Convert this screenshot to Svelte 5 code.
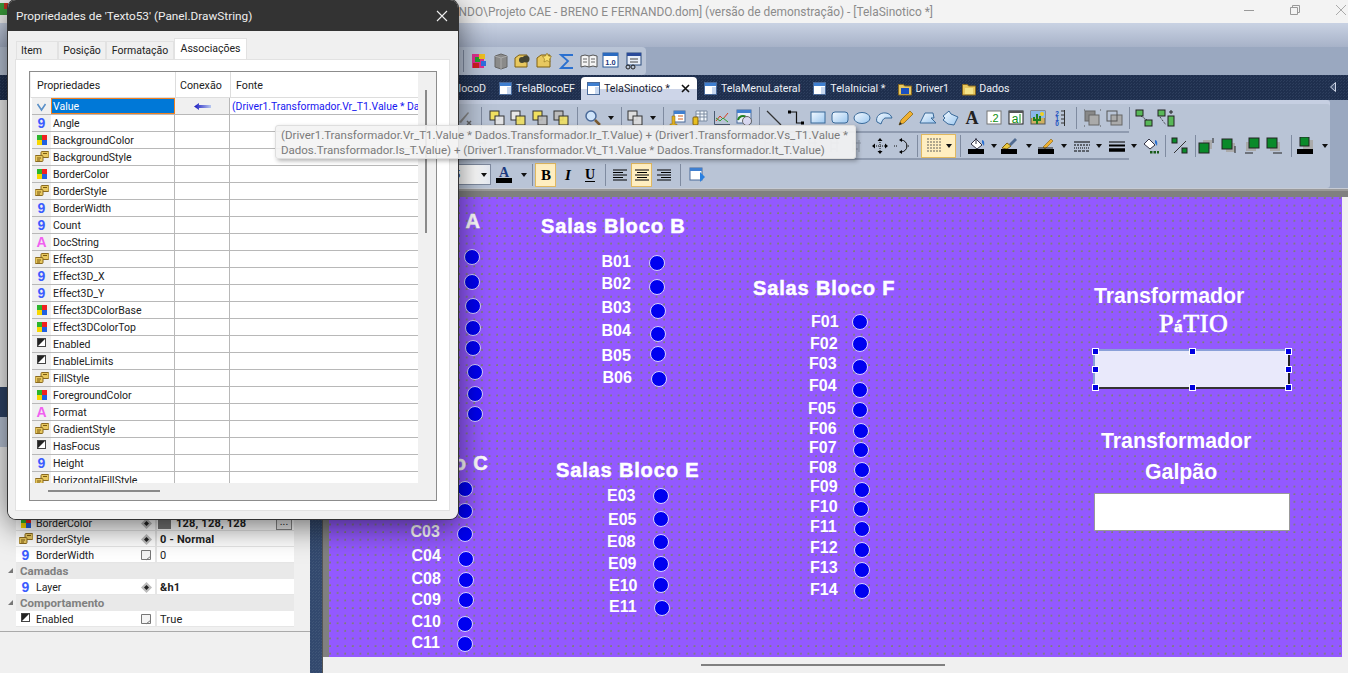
<script>
	const OX = 329, OY = 197;

	const titles = [
		{ t: 'Salas Bloco A', x: 337, y: 221 },
		{ t: 'Salas Bloco B', x: 541, y: 226 },
		{ t: 'Salas Bloco C', x: 344, y: 463 },
		{ t: 'Salas Bloco E', x: 556, y: 470 },
		{ t: 'Salas Bloco F', x: 753, y: 288 }
	];

	const labels = [
		['B01',601.5,262],['B02',601.5,284],['B03',601.5,308],['B04',601.5,331],['B05',601.5,356],['B06',602.5,378],
		['C03',410.5,532],['C04',411.5,556],['C08',411.5,579],['C09',411.5,600],['C10',411.5,622],['C11',411.5,643],
		['E03',607,496],['E05',608,520],['E08',607,542],['E09',608,564],['E10',609,586],['E11',609,607],
		['F01',811,322],['F02',810,344],['F03',809,364],['F04',809,386],['F05',808,409],['F06',809,429],['F07',809,448],
		['F08',809,468],['F09',810,487],['F10',810,507],['F11',810,527],['F12',810,548],['F13',810,568],['F14',810,590]
	];

	const dots = [
		[472,257],[472,282],[473,306],[473,328],[473,348],[475,372],[475,394],[475,414],
		[657,263],[657,287],[658,311],[658,334],[658,354],[659,379],
		[465,489],[465,511],[465,534],[466,559],[466,580],[466,600],[465,624],[465,644],[466,665],
		[661,496],[661,519],[661,542],[661,564],[661,585],[662,608],
		[860,322],[860,344],[860,367],[860,390],[860,410],[861,431],[861,450],[862,470],[862,490],[861,509],[862,529],[862,550],[862,570],[862,591]
	];

	const handles = [[0,0],[50,0],[100,0],[0,50],[100,50],[0,100],[50,100],[100,100]];

	const props = [
		['v','Value'],['n','Angle'],['c','BackgroundColor'],['s','BackgroundStyle'],['c','BorderColor'],['s','BorderStyle'],
		['n','BorderWidth'],['n','Count'],['a','DocString'],['s','Effect3D'],['n','Effect3D_X'],['n','Effect3D_Y'],
		['c','Effect3DColorBase'],['c','Effect3DColorTop'],['b','Enabled'],['b','EnableLimits'],['s','FillStyle'],
		['c','ForegroundColor'],['a','Format'],['s','GradientStyle'],['b','HasFocus'],['n','Height'],['s','HorizontalFillStyle']
	];

	const glyph = {
		v: '<polyline points="2.500,5 6.500,11 10.500,5" fill="none" stroke="#5a90c8" stroke-width="1.600"/>',
		n: '<text x="6.500" y="12" text-anchor="middle" font-family="Liberation Sans" font-weight="700" font-size="14" fill="#3d5cff">9</text>',
		a: '<text x="6.500" y="12" text-anchor="middle" font-family="Liberation Sans" font-weight="700" font-size="14" fill="#f060f0">A</text>',
		c: '<rect x="2" y="2" width="5" height="5" fill="#2cb52c"/><rect x="7" y="2" width="5" height="5" fill="#f02020"/><rect x="2" y="7" width="5" height="5" fill="#f8d800"/><rect x="7" y="7" width="5" height="5" fill="#2060e0"/>',
		s: '<rect x="6" y="1.500" width="8" height="6" rx="1" fill="#e8c860" stroke="#8a6a20"/><rect x="0" y="5.500" width="8" height="6" rx="1" fill="#e8c860" stroke="#8a6a20"/><path d="M2 8h4M2 10h3M8 3.500h4" stroke="#7a5a10"/>',
		b: '<rect x="2.500" y="1.500" width="8" height="8" fill="#fff" stroke="#444"/><path d="M3 2h7L3 9z" fill="#222"/>'
	};

	const win = '<rect x=".5" y=".5" width="12" height="12" fill="#fff" stroke="#4a6a9a"/><rect x="1" y="1" width="11" height="3" fill="#3f7fd0"/><rect x="8" y="5" width="4" height="7" fill="#c8d8f0"/>';
	const folder = (c) => `<path d="M.5 2.500h5l1 1.500h7v9h-13z" fill="#e8c860" stroke="#8a6a20"/><rect x="3" y="6" width="8" height="6" fill="${c}"/>`;
	const ovl = (a, b) => `<rect x="2" y="2" width="9" height="9" fill="${a}" stroke="#333"/><rect x="7" y="7" width="9" height="9" fill="${b}" stroke="#333" fill-opacity=".9"/>`;
	const bar = '<rect x="0" y="12" width="16" height="5" fill="#000"/>';

	const ic = {
		erase: '<path d="M3 13L12 3l1 1L5 14z" fill="#888"/><path d="M11 12l4 4m0-4l-4 4" stroke="#666" stroke-width="1.500"/>',
		o1: ovl('#f0e060','#e8e8e8'), o2: ovl('#e8e8e8','#f0e060'), o3: ovl('#f0e060','#bbb'), o4: ovl('#bbb','#f0e060'),
		mag: '<circle cx="7" cy="7" r="5" fill="#cfe4fa" stroke="#4a6a9a" stroke-width="1.500"/><path d="M11 11l5 5" stroke="#7a5a30" stroke-width="2.500"/>',
		ov: ovl('#ddd','#ddd'),
		tag: '<rect x="5" y="2" width="11" height="11" fill="#fff" stroke="#4a6a9a"/><rect x="5" y="2" width="11" height="3" fill="#3f7fd0"/><path d="M9 7h5M9 10h5" stroke="#d06020"/><path d="M3 15V7h3v8h2v2H1v-2z" fill="#e0b020" stroke="#806010" stroke-width=".5"/>',
		tbl: '<path d="M5 2h11v10H5z" fill="#f4f8fc" stroke="#7a8aa0"/><path d="M5 5h11M5 8h11M9 2v10M13 2v10" stroke="#7a8aa0"/><rect x="2" y="8" width="5" height="8" rx="1" fill="#e8c020" stroke="#806010"/>',
		chart: '<path d="M1.500 2v13.500H17" fill="none" stroke="#4a5a70"/><path d="M3 12l4-5 3 3 5-6" fill="none" stroke="#d04020"/><path d="M3 9l4 3 3-3 5 4" fill="none" stroke="#30a030"/>',
		run: '<rect x="2" y="1" width="14" height="13" fill="#e8eef8" stroke="#4a6a9a"/><rect x="2" y="1" width="14" height="3" fill="#3f7fd0"/><path d="M3 11a5 5 0 0 1 8-3" fill="none" stroke="#208020" stroke-width="2"/><circle cx="12" cy="12" r="4.500" fill="#d8d8f0" stroke="#666"/>',
		line: '<path d="M2 2l14 14" stroke="#333" stroke-width="1.200"/>',
		poly: '<path d="M2.500 3h7v11h6" fill="none" stroke="#111" stroke-width="1.200"/><rect x="1" y="1.500" width="3" height="3"/><rect x="14" y="12.500" width="3" height="3"/>',
		rect: '<rect x="2" y="3" width="14" height="11" fill="url(#blu)" stroke="#3a6a9a"/>',
		rrect: '<rect x="1" y="3" width="16" height="11" rx="3" fill="url(#blu)" stroke="#3a6a9a"/>',
		ell: '<ellipse cx="9" cy="9" rx="8" ry="5.500" fill="url(#blu)" stroke="#3a6a9a"/>',
		chord: '<path d="M2 13C0 8 5 3 11 4c3 .5 5 2 6 5l-7 0c-2 1-3 3-4 6z" fill="url(#blu)" stroke="#3a6a9a"/>',
		pencil: '<path d="M2 16l2-5 9-9 3 3-9 9z" fill="#f0b030" stroke="#806010" stroke-width=".7"/><path d="M2 16l1-3 2 2z" fill="#222"/>',
		pgon: '<path d="M1 14L6 4h8l1 5h-3l5 5z" fill="url(#blu)" stroke="#3a6a9a"/>',
		shape: '<path d="M2 7l6-5 2 3 7 3-4 8-6-1-5-4 2-2z" fill="url(#blu)" stroke="#3a6a9a"/>',
		atxt: '<text x="9" y="15" text-anchor="middle" font-family="Liberation Serif" font-weight="700" font-size="18" fill="#222">A</text>',
		num: '<rect x="2" y="2" width="14" height="13" fill="#fff" stroke="#777"/><text x="9" y="13" text-anchor="middle" font-family="Liberation Sans" font-size="11" fill="#109010">.2</text>',
		abox: '<rect x="2" y="2" width="14" height="13" fill="#fff" stroke="#222"/><rect x="2" y="2" width="14" height="2" fill="#555"/><text x="8" y="14" text-anchor="middle" font-family="Liberation Sans" font-size="12" fill="#109010">a</text><path d="M13 5v9" stroke="#109010"/>',
		pic: '<rect x="2" y="2" width="14" height="13" fill="#d0b060" stroke="#555"/><rect x="2" y="2" width="14" height="7" fill="#8ab8e8"/><circle cx="13" cy="5" r="2" fill="#f0d020"/><path d="M8 15V5m-3 3v3h6V7" fill="none" stroke="#208020" stroke-width="2"/>',
		scale: '<path d="M13.500 1v16M10 2h3.500M10 6h3.500M10 10h3.500M10 14h3.500" stroke="#333" fill="none"/><text x="6" y="7" text-anchor="middle" font-family="Liberation Sans" font-weight="700" font-size="6.500" fill="#2050c0">2</text><text x="6" y="12" text-anchor="middle" font-family="Liberation Sans" font-weight="700" font-size="6.500" fill="#2050c0">1</text><text x="6" y="17" text-anchor="middle" font-family="Liberation Sans" font-weight="700" font-size="6.500" fill="#2050c0">0</text>',
		g1: '<rect x="2" y="2" width="10" height="10" fill="#888" stroke="#666"/><rect x="6" y="6" width="10" height="10" fill="#aaa" stroke="#666"/><path d="M1 1h1M17 1h1M1 17h1M17 17h1" stroke="#555"/>',
		g2: '<rect x="6" y="6" width="11" height="10" fill="#aaa" stroke="#666"/><rect x="2" y="2" width="10" height="10" fill="none" stroke="#555"/>',
		gr1: '<rect x="1" y="1" width="7" height="6" fill="#58b858" stroke="#222"/><rect x="10" y="11" width="7" height="6" fill="#58b858" stroke="#222"/><path d="M6 7l6 4" stroke="#222" stroke-dasharray="1 1"/>',
		gr2: '<rect x="1" y="1" width="7" height="6" fill="#58b858" stroke="#222"/><rect x="11" y="7" width="6" height="10" fill="#58b858" stroke="#222"/><path d="M3 8l6 8" stroke="#222" stroke-dasharray="1 1"/><path d="M12 3h4M14 1v4" stroke="#222"/>',
		dis: '<path d="M4 3v12M10 3v12M4 6h8M4 12h5" stroke="#8e98a8" fill="none"/>',
		move: '<path d="M9 3v12M3 9h12" stroke="#111" stroke-dasharray="1 1"/><path d="M9 1l-2.500 3h5zM9 17l-2.500-3h5zM1 9l3-2.500v5zM17 9l-3-2.500v5z"/>',
		rot: '<path d="M1 9h4M13 9h4" stroke="#111" stroke-dasharray="1 1"/><path d="M8 3a6 6 0 0 1 0 12" fill="none" stroke="#111"/><path d="M9 1v4l-3-2zM9 17v-4l-3 2z"/>',
		fill: '<path d="M3 7l5-5 6 6-5 4z" fill="#fff" stroke="#334"/><path d="M8 1v6" stroke="#334"/><path d="M14 3q3 0 2 6l-2-3z" fill="#2a70d0"/>' + bar,
		brush: '<path d="M1 11l5-5 4 3-4 3z" fill="#e8c840" stroke="#806010"/><path d="M8 7l6-6 2 2-6 6z" fill="#506a90"/>' + bar,
		pen: '<path d="M5 10L13 2l2 2-8 8z" fill="#f0b030" stroke="#806010" stroke-width=".6"/><path d="M0 11h15" stroke="#222"/>' + bar,
		dash: '<path d="M1 5h16" stroke="#000" stroke-width="1"/><path d="M1 8h16" stroke="#000" stroke-dasharray="2 1"/><path d="M1 11h16" stroke="#000" stroke-dasharray="1 1"/><path d="M1 14h16" stroke="#000" stroke-dasharray="3 1"/>',
		thick: '<path d="M1 5h16" stroke="#000"/><path d="M1 8.500h16" stroke="#000" stroke-width="2"/><path d="M1 13h16" stroke="#000" stroke-width="3.500"/>',
		fill2: '<path d="M3 7l5-5 6 6-5 4z" fill="#fff" stroke="#334"/><path d="M14 3q3 0 2 6l-2-3z" fill="#2a70d0"/><rect x="9" y="14" width="2.500" height="2.500" fill="#185a18"/><rect x="12.500" y="14" width="2.500" height="2.500" fill="#185a18"/><rect x="16" y="14" width="2" height="2.500" fill="#185a18"/>',
		sw: '<rect x="1" y="1" width="5" height="5" fill="#0a8a2a" stroke="#222"/><path d="M3 16L15 4" stroke="#333"/><rect x="11" y="11" width="5" height="5" fill="#0a8a2a" stroke="#222"/>',
		up: '<rect x="5" y="3" width="9" height="9" fill="#aaa"/><rect x="1" y="6" width="10" height="10" fill="#0a8a2a" stroke="#222"/><path d="M15 1v5" stroke="#222"/>',
		down: '<rect x="6" y="6" width="9" height="9" fill="#aaa"/><rect x="2" y="2" width="10" height="10" fill="#0a8a2a" stroke="#222"/><path d="M15 9v7" stroke="#222"/>',
		left: '<rect x="3" y="5" width="10" height="9" fill="#aaa"/><rect x="6" y="1" width="10" height="10" fill="#0a8a2a" stroke="#222"/><path d="M2 16h8" stroke="#222"/>',
		right: '<rect x="5" y="5" width="10" height="9" fill="#aaa"/><rect x="2" y="1" width="10" height="10" fill="#0a8a2a" stroke="#222"/><path d="M8 16h9" stroke="#222"/>',
		shadow: '<rect x="6" y="3" width="10" height="9" fill="#aaa"/><rect x="3" y="0" width="9" height="9" fill="#0a8a2a" stroke="#222"/>' + bar,
		text: '<text x="8" y="11" text-anchor="middle" font-family="Liberation Serif" font-weight="700" font-size="14" fill="#1c3a80">A</text><rect x="0" y="12" width="16" height="5" fill="#000"/>',
		bold: '<text x="9" y="14" text-anchor="middle" font-family="Liberation Serif" font-weight="700" font-size="15" fill="#000">B</text>',
		ital: '<text x="9" y="14" text-anchor="middle" font-family="Liberation Serif" font-weight="700" font-style="italic" font-size="15" fill="#000">I</text>',
		und: '<text x="9" y="13" text-anchor="middle" font-family="Liberation Serif" font-weight="700" font-size="14" fill="#000">U</text><path d="M4 15.500h10" stroke="#000"/>',
		al: '<path d="M2 4h14M2 6.500h10M2 9h14M2 11.500h10M2 14h14" stroke="#000"/>',
		ac: '<path d="M2 4h14M4 6.500h10M2 9h14M4 11.500h10M2 14h14" stroke="#000"/>',
		ar: '<path d="M2 4h14M6 6.500h10M2 9h14M6 11.500h10M2 14h14" stroke="#000"/>',
		play: '<rect x="2" y="2" width="12" height="12" fill="#fff" stroke="#4a6a9a"/><rect x="2" y="2" width="12" height="3" fill="#3f7fd0"/><path d="M12 6l5 5-5 5z" fill="#2a80e0"/>',
		pal: '<rect x="2" y="2" width="12" height="14" fill="#e03090"/><rect x="5" y="5" width="5" height="5" fill="#20a030"/><rect x="9" y="2" width="6" height="5" fill="#f0c020"/><rect x="3" y="11" width="6" height="5" fill="#d02020"/><rect x="11" y="9" width="5" height="5" fill="#3070e0"/>',
		db: '<path d="M3 4l6-2 6 2v11l-6 2-6-2z" fill="#8a8a8a" stroke="#666"/><path d="M3 4l6 2 6-2M9 6v11" stroke="#aaa" fill="none"/>',
		fbin: '<path d="M1 15V6l4-3h8v12z" fill="#e8c860" stroke="#806010"/><circle cx="12" cy="7" r="3.500" fill="#443"/><circle cx="8" cy="8" r="3" fill="#443"/>',
		fstar: '<path d="M1 15V6l4-3h9v12z" fill="#e8c860" stroke="#806010"/><path d="M11 1l1.500 3 3 .5-2 2.500.5 3-3-1.500-3 1.500.5-3-2-2.500 3-.5z" fill="#f8e070" stroke="#806010" stroke-width=".5"/>',
		sig: '<path d="M15 3H3l7 6-7 7h12" fill="none" stroke="#2a70d0" stroke-width="1.800"/>',
		book: '<path d="M1 4q4-2 8 0 4-2 8 0v11q-4-2-8 0-4-2-8 0z" fill="#f4f4f4" stroke="#555"/><path d="M9 4v11M3 7h4M3 10h4M11 7h4M11 10h4" stroke="#666"/>',
		ten: '<rect x="1" y="1" width="15" height="14" fill="#fff" stroke="#2a5a9a"/><rect x="1" y="1" width="15" height="3" fill="#2a6ac0"/><text x="8.500" y="13" text-anchor="middle" font-family="Liberation Sans" font-weight="700" font-size="7.500" fill="#1a3a80">1.0</text>',
		form: '<rect x="3" y="1" width="14" height="12" fill="#e8eef8" stroke="#2a4a7a"/><rect x="3" y="1" width="14" height="3" fill="#2a4a9a"/><path d="M6 7h8M6 10h8" stroke="#444"/><circle cx="4" cy="15" r="2" fill="none" stroke="#222"/><circle cx="9" cy="15" r="2" fill="none" stroke="#222"/>'
	};

	const parse = (s) => s.split(' ').map((p) => {
		const [i, w, on] = p.split(':');
		return { i, w: +w, on: on === 'on' };
	});

	const topRow = parse('sep:9 pal:22 db:22 fbin:22 fstar:22 sig:22 book:22 ten:22 form:22');
	const row1 = parse('erase:22 sep:10 o1:21.5 o2:21.5 o3:21.5 o4:21.5 sep:10 mag:21.5 dd:14 sep:7 ov:21.5 dd:14 sep:7 tag:22 tbl:22 chart:22 run:22 sep:8 line:22 poly:22 rect:22 rrect:22 ell:22 chord:22 pencil:22 pgon:22 shape:22 atxt:22 num:22 abox:22 pic:22 scale:22 sep:10 g1:22 g2:22 sep:8 gr1:22 gr2:22');
	const row2 = parse(Array(18).fill('dis:22').join(' ') + ' move:22 rot:22 sep:8 grid:35:on sep:8 fill:26 dd:8 brush:24 dd:14 pen:22 dd:12 dash:24 dd:10 thick:26 dd:8 fill2:24 sep:6 sw:24 sep:6 up:18 down:26 left:20 right:24 sep:10 shadow:20 dd:18');
	const row3 = parse('text:28 dd:10 sep:6 bold:21:on ital:23 und:22 sep:8 al:22 ac:21:on ar:24 sep:8 play:26');

	const tabs = [
		{ name: 'TelaBlocoD', kind: 'win' },
		{ name: 'TelaBlocoEF', kind: 'win' },
		{ name: 'TelaSinotico *', kind: 'win', active: true },
		{ name: 'TelaMenuLateral', kind: 'win' },
		{ name: 'TelaInicial *', kind: 'win' },
		{ name: 'Driver1', kind: 'drv' },
		{ name: 'Dados', kind: 'dat' }
	];

	const lower = [
		{ cat: false, g: 'c', n: 'BorderColor', m: true, v: '128, 128, 128', swatch: true },
		{ cat: false, g: 's', n: 'BorderStyle', m: true, v: '0 - Normal' },
		{ cat: false, g: 'n', n: 'BorderWidth', m: false, v: '0', plain: true },
		{ cat: true, n: 'Camadas' },
		{ cat: false, g: 'n', n: 'Layer', m: true, v: '&h1' },
		{ cat: true, n: 'Comportamento' },
		{ cat: false, g: 'b', n: 'Enabled', m: false, v: 'True', plain: true }
	];
</script>

<div class="app">
	<header class="title">
		<svg class="appicon" width="8" height="12" viewBox="0 0 8 12"><rect width="8" height="12" fill="#3a9a3a"/><rect x="4" width="4" height="6" fill="#c03020"/></svg>
		<span class="title-text">FERNANDO\Projeto CAE - BRENO E FERNANDO.dom] (versão de demonstração) - [TelaSinotico *]</span>
		<div class="winbtns">
			<svg width="12" height="12" viewBox="0 0 12 12"><path d="M1 6.500h10" stroke="#999"/></svg>
			<svg width="12" height="12" viewBox="0 0 12 12"><path d="M1.500 3.500h7v7h-7zM3.500 3V1.500h7v7H9" fill="none" stroke="#999"/></svg>
			<svg width="12" height="12" viewBox="0 0 12 12"><path d="M1 1l10 10M11 1L1 11" stroke="#aaa"/></svg>
		</div>
	</header>

	<div class="menubar"></div>

	<div class="strip">
		<div class="strip-bar">
			{#each topRow as b}
				{#if b.i === 'sep'}
					<span class="sep" style:width="{b.w}px"></span>
				{:else}
					<span class="tool" style:width="{b.w}px"><svg width="18" height="18" viewBox="0 0 18 18">{@html ic[b.i]}</svg></span>
				{/if}
			{/each}
		</div>
	</div>

	<nav class="tabs">
		{#each tabs as t}
			<div class="tab" class:active={t.active}>
				<svg width="14" height="14" viewBox="0 0 14 14">
					{#if t.kind === 'win'}{@html win}{:else if t.kind === 'drv'}{@html folder('#1a50c0')}{:else}{@html folder('#f4e48a')}{/if}
				</svg>
				<span>{t.name}</span>
				{#if t.active}
					<svg class="tabx" width="9" height="9" viewBox="0 0 9 9"><path d="M1 1l7 7M8 1L1 8" stroke="#111" stroke-width="1.600"/></svg>
				{/if}
			</div>
		{/each}
		<svg class="tab-arrow" width="8" height="12" viewBox="0 0 8 12"><path d="M6.500 1.500v9L1.500 6z" fill="#4a5a78" stroke="#cfd6e6"/></svg>
	</nav>

	<div class="main">
		<aside class="side">
			<div class="side-top"></div>
			<div class="side-nav"></div>
			<div class="side-head"></div>
			<div class="side-gap"></div>
			<div class="lower">
				{#each lower as r}
					{#if r.cat}
						<div class="lrow cat"><span class="tri"></span>{r.n}</div>
					{:else}
						<div class="lrow">
							<span class="lic"><svg width="14" height="14" viewBox="0 0 14 14">{@html glyph[r.g]}</svg></span>
							<span class="lname">{r.n}</span>
							<span class="lmark">
								{#if r.m}
									<svg width="11" height="11" viewBox="0 0 11 11"><path d="M5.500 0l5.500 5.500-5.500 5.500L0 5.500z" fill="#bbb"/><path d="M5.500 3L8 5.500 5.500 8 3 5.500z" fill="#222"/></svg>
								{:else}
									<svg width="11" height="11" viewBox="0 0 11 11"><path d="M.5.500h9v9h-9z" fill="#f4f4f4" stroke="#777"/><path d="M5 10l5-4" stroke="#777"/></svg>
								{/if}
							</span>
							<span class="lval" class:plain={r.plain}>
								{#if r.swatch}<i class="swatch"></i>{/if}{r.v}
							</span>
							{#if r.swatch}<span class="more">...</span>{/if}
						</div>
					{/if}
				{/each}
			</div>
			<div class="side-bottom"></div>
		</aside>

		<div class="split"></div>

		<section class="work">
			<div class="drawbar">
				<div class="drawbar-in">
					<div class="row">
						{#each row1 as b}
							{#if b.i === 'sep'}<span class="sep" style:width="{b.w}px"></span>
							{:else if b.i === 'dd'}<span class="dd" style:width="{b.w}px"></span>
							{:else}<span class="tool" style:width="{b.w}px"><svg width="18" height="18" viewBox="0 0 18 18">{@html ic[b.i]}</svg></span>{/if}
						{/each}
					</div>
					<div class="row row2">
						{#each row2 as b}
							{#if b.i === 'sep'}<span class="sep" style:width="{b.w}px"></span>
							{:else if b.i === 'dd'}<span class="dd" style:width="{b.w}px"></span>
							{:else if b.i === 'grid'}<span class="gridbtn" style:width="{b.w}px"><i class="griddots"></i><i class="dd ddin"></i></span>
							{:else}<span class="tool" style:width="{b.w}px"><svg width="18" height="18" viewBox="0 0 18 18">{@html ic[b.i]}</svg></span>{/if}
						{/each}
					</div>
					<div class="row row3">
						<span class="combo"><span>5</span><i class="dd ddin"></i></span>
						{#each row3 as b}
							{#if b.i === 'sep'}<span class="sep" style:width="{b.w}px"></span>
							{:else if b.i === 'dd'}<span class="dd" style:width="{b.w}px"></span>
							{:else}<span class="tool" class:on={b.on} style:width="{b.w}px"><svg width="18" height="18" viewBox="0 0 18 18">{@html ic[b.i]}</svg></span>{/if}
						{/each}
					</div>
				</div>
			</div>

			<div class="ruler"></div>

			<div class="view">
				<div class="gutter"></div>
				<div class="canvas">
					{#each titles as t}
						<span class="ctitle" style:left="{t.x - OX}px" style:top="{t.y - OY}px">{t.t}</span>
					{/each}
					{#each labels as [t, x, y]}
						<span class="clabel" style:left="{x - OX}px" style:top="{y - OY}px">{t}</span>
					{/each}
					{#each dots as [x, y]}
						<span class="led" style:left="{x - OX}px" style:top="{y - OY}px"></span>
					{/each}

					<span class="big" style="left:{1094 - OX}px;top:{296 - OY}px">Transformador</span>
					<span class="patio" style="left:{1159 - OX}px;top:{324 - OY}px">P<small>á</small>TIO</span>
					<div class="box selected" style="left:{1093 - OX}px;top:{349 - OY}px">
						{#each handles as [hx, hy]}
							<i class="handle" style:left="{hx}%" style:top="{hy}%"></i>
						{/each}
					</div>
					<span class="big" style="left:{1101 - OX}px;top:{441 - OY}px">Transformador</span>
					<span class="big" style="left:{1145 - OX}px;top:{472 - OY}px">Galpão</span>
					<div class="box plain" style="left:{1094 - OX}px;top:{493 - OY}px"></div>
				</div>
				<div class="vgap"></div>
			</div>

			<div class="hscroll"><span class="hthumb"></span></div>
		</section>
	</div>

	<div class="dialog">
		<div class="dlg-title">
			<span>Propriedades de 'Texto53' (Panel.DrawString)</span>
			<svg width="12" height="12" viewBox="0 0 12 12"><path d="M1 1l10 10M11 1L1 11" stroke="#eee" stroke-width="1.100"/></svg>
		</div>
		<div class="dlg-body">
			<div class="dlg-tabs">
				<span class="dtab first">Item</span>
				<span class="dtab" style:width="48px">Posição</span>
				<span class="dtab" style:width="68px">Formatação</span>
				<span class="dtab on" style:width="73px">Associações</span>
			</div>
			<div class="page">
				<div class="grid">
					<div class="grid-main">
						<div class="ghead">
							<span class="c1">Propriedades</span>
							<span class="c2">Conexão</span>
							<span class="c3">Fonte</span>
						</div>
						<div class="gbody">
							{#each props as [g, n], i}
								<div class="grow">
									<span class="gicon"><svg width="14" height="14" viewBox="0 0 14 14">{@html glyph[g]}</svg></span>
									<span class="gname" class:sel={i === 0}>{n}</span>
									<span class="gconn" class:linked={i === 0}>
										{#if i === 0}
											<svg width="17" height="9" viewBox="0 0 17 9"><defs><linearGradient id="arr"><stop offset="0" stop-color="#1818c0"/><stop offset="1" stop-color="#b8c8f0"/></linearGradient></defs><path d="M0 4.500L5 1v2h12v3H5v2z" fill="url(#arr)"/></svg>
										{/if}
									</span>
									<span class="gsrc">{i === 0 ? '(Driver1.Transformador.Vr_T1.Value * Dados.Transformador.Ir_T.Value)' : ''}</span>
								</div>
							{/each}
						</div>
						<div class="ghscroll"><i></i></div>
					</div>
					<div class="gvscroll"><i></i></div>
				</div>
			</div>
		</div>
	</div>

	<div class="tooltip">
		(Driver1.Transformador.Vr_T1.Value * Dados.Transformador.Ir_T.Value) + (Driver1.Transformador.Vs_T1.Value *<br />
		Dados.Transformador.Is_T.Value) + (Driver1.Transformador.Vt_T1.Value * Dados.Transformador.It_T.Value)
	</div>

	<svg width="0" height="0" class="defs"><defs><linearGradient id="blu" x1="0" y1="0" x2="1" y2="1"><stop offset="0" stop-color="#f4f9ff"/><stop offset="1" stop-color="#9cc8f0"/></linearGradient></defs></svg>
</div>

<style>
	:global(body) {
		margin: 0;
		background: #f0f0f0;
	}

	.app {
		position: relative;
		width: 1348px;
		height: 673px;
		overflow: hidden;
		display: flex;
		flex-direction: column;
		font-family: Roboto, "Noto Sans", sans-serif;
	}

	.defs {
		position: absolute;
	}

	.title {
		height: 23px;
		flex: none;
		background: #f3f3f3;
		display: flex;
		align-items: center;
		position: relative;
		font-size: 11.9px;
		color: #8b8b8b;
	}

	.appicon {
		margin: -6px 0 0 0;
	}

	.title-text {
		width: 925px;
		text-align: right;
		white-space: nowrap;
		overflow: hidden;
		flex: none;
	}

	.winbtns {
		margin-left: auto;
		display: flex;
		gap: 34px;
		margin-right: 1px;
		padding-bottom: 4px;
	}

	.menubar {
		height: 24px;
		flex: none;
		background: linear-gradient(#c9d2e3, #a7b2c8);
	}

	.strip {
		height: 28px;
		flex: none;
		background: #9aa8c0;
	}

	.strip-bar {
		width: 646px;
		height: 100%;
		box-sizing: border-box;
		padding-left: 459px;
		background: #b9c4d6;
		border-radius: 0 4px 4px 0;
		display: flex;
		align-items: center;
	}

	.tabs {
		height: 25px;
		flex: none;
		box-sizing: border-box;
		padding: 2px 0 0 408px;
		display: flex;
		position: relative;
		background-color: #1f2f4e;
		background-image: linear-gradient(45deg, #2d3e5d 25%, transparent 25%, transparent 75%, #2d3e5d 75%);
		background-size: 3px 3px;
		color: #eef1f6;
		font-size: 10.7px;
	}

	.tab {
		display: flex;
		align-items: center;
		gap: 3px;
		padding: 0 6px 0 7px;
		white-space: nowrap;
	}

	.tab.active {
		background: linear-gradient(#ffffff 50%, #cdd5e8 50%);
		border-radius: 4px 4px 0 0;
		color: #1a2233;
		padding: 0 7px 0 6px;
		width: 103px;
	}

	.tabx {
		margin-left: auto;
		margin-right: 0;
	}

	.tab-arrow {
		position: absolute;
		left: 1329px;
		top: 6px;
	}

	.main {
		flex: 1;
		display: flex;
		min-height: 0;
	}

	.side {
		width: 310px;
		flex: none;
		display: flex;
		flex-direction: column;
		background: #f0f0f0;
		font-size: 10.5px;
		color: #222;
	}

	.side-top {
		height: 287px;
		flex: none;
		background: #f0f0f0;
	}

	.side-nav {
		height: 30px;
		flex: none;
		background: #2f4468;
	}

	.side-head {
		height: 30px;
		flex: none;
		background: #b9c4d6;
	}

	.side-gap {
		flex: 1;
	}

	.lower {
		margin: 0 16px 0 16px;
		flex: none;
	}

	.lrow {
		height: 16px;
		display: flex;
		align-items: center;
		background: #fff;
		width: 278px;
		position: relative;
		box-shadow: inset 0 -1px 0 #e6e6e6;
	}

	.lrow.cat {
		background: #e9e9e9;
		color: #808080;
		font-weight: 700;
		font-size: 11.5px;
		padding-left: 4px;
		box-sizing: border-box;
		box-shadow: none;
	}

	.tri {
		position: absolute;
		left: -8px;
		top: 5px;
		border-left: 5px solid transparent;
		border-bottom: 5px solid #777;
	}

	.lic {
		width: 20px;
		flex: none;
		display: flex;
		justify-content: center;
	}

	.lname {
		width: 105px;
		flex: none;
	}

	.lmark {
		width: 14px;
		flex: none;
		display: flex;
	}

	.lval {
		border-left: 2px solid #e6e6e6;
		padding-left: 3px;
		height: 100%;
		display: flex;
		align-items: center;
		font-weight: 700;
		font-size: 11px;
		letter-spacing: .2px;
	}

	.lval.plain {
		font-weight: 400;
	}

	.swatch {
		width: 13px;
		height: 11px;
		background: #777;
		margin: 0 5px 0 -2px;
	}

	.more {
		position: absolute;
		right: 2px;
		top: 2px;
		width: 14px;
		height: 11px;
		line-height: 8px;
		text-align: center;
		border: 1px solid #888;
		background: #eee;
	}

	.side-bottom {
		height: 42px;
		flex: none;
		margin-top: 4px;
		border-top: 1px solid #aaa;
		box-sizing: border-box;
	}

	.split {
		width: 12px;
		flex: none;
		background-color: #33496e;
		background-image: linear-gradient(45deg, #3f5577 25%, transparent 25%, transparent 75%, #3f5577 75%);
		background-size: 3px 3px;
	}

	.work {
		flex: 1;
		min-width: 0;
		display: flex;
		flex-direction: column;
		background: #f0f0f0;
	}

	.drawbar {
		height: 88px;
		flex: none;
		background: #9aa8c0;
		padding-top: 4px;
		box-sizing: border-box;
	}

	.drawbar-in {
		width: 1008px;
		height: 84px;
		background: #b9c4d6;
		box-shadow: 0 -4px 0 #c6cfe2;
		border-radius: 0 3px 3px 0;
	}

	.row {
		height: 27px;
		display: flex;
		align-items: center;
		padding-left: 132px;
	}

	.row2 {
		height: 29px;
		padding-left: 151px;
		position: relative;
	}

	.row2::before,
	.row2::after {
		content: "";
		position: absolute;
		left: 0;
		width: 807px;
		height: 2px;
		background: #8f9bb0;
	}

	.row2::before {
		top: 0;
	}

	.row2::after {
		bottom: 0;
	}

	.row3 {
		height: 28px;
		padding-left: 119px;
		padding-top: 1px;
		box-sizing: border-box;
	}

	.tool {
		display: flex;
		justify-content: center;
		align-items: center;
		height: 24px;
		flex: none;
		box-sizing: border-box;
	}

	.tool.on {
		background: #ffeec0;
		border: 1px solid #e0b860;
	}

	.sep {
		flex: none;
		height: 22px;
		display: flex;
		justify-content: center;
		position: relative;
	}

	.sep::after {
		content: "";
		width: 1px;
		background: #7f8ba0;
	}

	.dd {
		flex: none;
		height: 22px;
		position: relative;
		display: block;
	}

	.dd::after {
		content: "";
		position: absolute;
		left: calc(50% - 3px);
		top: 9px;
		border: 3px solid transparent;
		border-top: 4px solid #111;
		border-bottom: 0;
	}

	.ddin {
		width: 12px;
		margin-left: auto;
	}

	.gridbtn {
		height: 24px;
		box-sizing: border-box;
		flex: none;
		display: flex;
		align-items: center;
		background: #ffeec0;
		border: 1px solid #e0b860;
		padding-left: 5px;
	}

	.griddots {
		width: 15px;
		height: 15px;
		background-image: radial-gradient(circle at 1px 1px, #555 .6px, transparent .8px);
		background-size: 3px 3px;
	}

	.combo {
		width: 50px;
		height: 21px;
		flex: none;
		box-sizing: border-box;
		border: 1px solid #7f8ba0;
		padding-left: 12px;
		background: linear-gradient(90deg, #fff 70%, #e4e8f0);
		display: flex;
		align-items: center;
		font-size: 11px;
		color: #222;
	}

	.ruler {
		height: 9px;
		flex: none;
		background: #808080;
		border-top: 1px solid #c6cbd4;
		box-sizing: border-box;
		box-shadow: inset 0 2px 0 #9a9a9a;
	}

	.view {
		height: 460px;
		flex: none;
		display: flex;
	}

	.gutter {
		width: 7px;
		flex: none;
		background: #808080;
		border-left: 1px solid #555;
		box-sizing: border-box;
	}

	.canvas {
		flex: 1;
		position: relative;
		overflow: hidden;
		background-color: #9359ff;
		background-image: radial-gradient(circle at 1px 1px, rgba(120, 135, 85, .85) .65px, transparent .85px);
		background-size: 7.6px 7.6px;
		font-family: "Liberation Sans", Arial, sans-serif;
		color: #fff;
		font-weight: 700;
	}

	.vgap {
		width: 6px;
		flex: none;
	}

	.ctitle,
	.clabel,
	.big,
	.patio {
		position: absolute;
		white-space: nowrap;
		transform: translateY(-50%);
		line-height: 1;
	}

	.ctitle {
		font-size: 20px;
		letter-spacing: .85px;
		-webkit-text-stroke: .5px #fff;
	}

	.clabel {
		font-size: 16px;
	}

	.big {
		font-size: 21.3px;
		line-height: 22px;
	}

	.patio {
		font-family: "Liberation Serif", serif;
		font-size: 26px;
		letter-spacing: .6px;
		font-weight: 400;
		-webkit-text-stroke: .7px #fff;
	}

	.patio small {
		font-size: 17px;
		font-weight: 700;
	}

	.led {
		position: absolute;
		width: 16px;
		height: 16px;
		box-sizing: border-box;
		margin: -8px 0 0 -8px;
		border-radius: 50%;
		background: #0000f0;
		border: 1px solid #d8d0ff;
	}

	.box {
		position: absolute;
		width: 197px;
		height: 40px;
		box-sizing: border-box;
	}

	.box.plain {
		width: 196px;
		height: 38px;
		background: #fff;
		border: 1px solid #999;
	}

	.box.selected {
		background: #e9e9fb;
		border: 2px solid;
		border-color: #8aa0d8 #222 #333 #8aa0d8;
	}

	.handle {
		position: absolute;
		width: 5px;
		height: 5px;
		margin: -3px 0 0 -3px;
		background: #0000e0;
		border: 1px solid #fff;
	}

	.hscroll {
		height: 16px;
		flex: none;
		border-left: 1px solid #555;
		display: flex;
		align-items: center;
	}

	.hthumb {
		margin-left: 378px;
		width: 244px;
		height: 2px;
		background: #808080;
	}

	.dialog {
		position: absolute;
		left: 8px;
		top: 0;
		width: 450px;
		height: 519px;
		display: flex;
		flex-direction: column;
		border-radius: 8px;
		overflow: hidden;
		box-shadow: 0 0 0 1px #333, 0 6px 32px rgba(0, 0, 0, .6);
		font-size: 10.5px;
		color: #222;
	}

	.dlg-title {
		height: 31px;
		flex: none;
		background: #333;
		color: #eee;
		font-size: 11.8px;
		display: flex;
		align-items: center;
		justify-content: space-between;
		padding: 0 10px 0 8px;
	}

	.dlg-body {
		flex: 1;
		background: #f0f0f0;
		padding: 7px 8px 8px 7px;
		display: flex;
		flex-direction: column;
		min-height: 0;
	}

	.dlg-tabs {
		display: flex;
		height: 21px;
		align-items: flex-end;
		padding-left: 1px;
		flex: none;
	}

	.dtab {
		height: 18px;
		box-sizing: border-box;
		background: #f0f0f0;
		border: 1px solid #e2e2e2;
		border-bottom: 0;
		text-align: center;
		line-height: 18px;
		flex: none;
	}

	.dtab.first {
		width: 42px;
		text-align: left;
		padding-left: 4px;
	}

	.dtab.on {
		height: 21px;
		background: #fff;
		line-height: 19px;
	}

	.page {
		flex: 1;
		background: #fff;
		border: 1px solid #e2e2e2;
		padding: 11px 12px 9px 13px;
		min-height: 0;
		display: flex;
	}

	.grid {
		flex: 1;
		border: 1px solid #8c8c8c;
		display: flex;
		min-width: 0;
		background: #f0f0f0;
	}

	.grid-main {
		width: 388px;
		flex: none;
		display: flex;
		flex-direction: column;
		background: #f0f0f0;
	}

	.ghead {
		height: 25px;
		flex: none;
		display: flex;
		background: #fff;
		align-items: center;
		font-size: 10.7px;
		margin-left: 1px;
		border-bottom: 1px solid #ddd;
	}

	.c1 {
		width: 145px;
		padding-left: 6px;
		box-sizing: border-box;
		border-right: 1px solid #ddd;
		line-height: 27px;
		height: 25px;
	}

	.c2 {
		width: 55px;
		padding-left: 4px;
		box-sizing: border-box;
		border-right: 1px solid #ddd;
		line-height: 27px;
		height: 25px;
	}

	.c3 {
		padding-left: 5px;
		line-height: 27px;
		height: 25px;
	}

	.gbody {
		height: 385px;
		flex: none;
		overflow: hidden;
		background: #fff;
	}

	.grow {
		height: 17px;
		box-sizing: border-box;
		display: flex;
		align-items: stretch;
		border-bottom: 1px solid #b8b8b8;
		margin-left: 2px;
	}

	.gicon {
		width: 19px;
		flex: none;
		background: #f0f0f0;
		display: flex;
		justify-content: center;
		align-items: center;
	}

	.gname {
		width: 124px;
		flex: none;
		box-sizing: border-box;
		padding-left: 2px;
		line-height: 18px;
		border-right: 1px solid #b8b8b8;
	}

	.gname.sel {
		background: #0078d7;
		color: #fff;
		outline: 1px solid #f08020;
		outline-offset: -1px;
	}

	.gconn {
		width: 55px;
		flex: none;
		box-sizing: border-box;
		border-right: 1px solid #b8b8b8;
		display: flex;
		justify-content: center;
		align-items: center;
	}

	.gconn.linked {
		background: #f0f0f0;
	}

	.gsrc {
		flex: 1;
		min-width: 0;
		overflow: hidden;
		white-space: nowrap;
		padding-left: 2px;
		color: #1616f0;
		font-size: 10.4px;
		line-height: 18px;
	}

	.ghscroll {
		flex: 1;
		position: relative;
	}

	.ghscroll i {
		position: absolute;
		left: 18px;
		top: 7px;
		width: 112px;
		height: 2px;
		background: #8a8a8a;
	}

	.gvscroll {
		flex: 1;
		position: relative;
	}

	.gvscroll i {
		position: absolute;
		left: 7px;
		top: 18px;
		width: 2px;
		height: 143px;
		background: #8a8a8a;
	}

	.tooltip {
		position: absolute;
		left: 275px;
		top: 125px;
		width: 581px;
		height: 34px;
		box-sizing: border-box;
		padding: 2px 5px;
		background: rgba(243, 243, 243, .9);
		border: 1px solid #dedede;
		border-radius: 3px;
		box-shadow: 2px 2px 4px rgba(0, 0, 0, .3);
		color: #7a7a7a;
		font-size: 11.5px;
		line-height: 15px;
		white-space: nowrap;
	}
</style>
